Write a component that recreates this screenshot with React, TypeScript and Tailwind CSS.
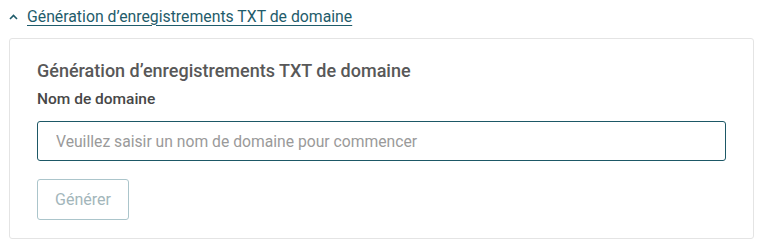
import React, { useState } from 'react';

const App: React.FC = () => {
  const [open, setOpen] = useState(true);
  const [domain, setDomain] = useState('');

  return (
    <div className="min-h-screen bg-white px-[9px] font-['Roboto',sans-serif]">
      {/* Lien repliable */}
      <button
        onClick={() => setOpen(!open)}
        className="flex h-[33px] items-center gap-[9px] text-[15.8px] text-[#1f5c6b]"
      >
        <svg className="h-[8px] w-[9px]" viewBox="0 0 9 6" fill="none" stroke="currentColor" strokeWidth="1.6">
          <path d="M1 5 L4.5 1.5 L8 5" />
        </svg>
        <span className="underline underline-offset-[3px] decoration-1">Génération d’enregistrements TXT de domaine</span>
      </button>

      {open && (
        <div className="mt-[5px] rounded-[3px] border border-[#e4e4e4] px-[27px] pt-[20px] pb-[18px]">
          <h2 className="text-[18px] font-medium leading-[24px] text-[#585858]">
            Génération d’enregistrements TXT de domaine
          </h2>
          <label className="mt-[6px] block text-[15.5px] font-medium leading-[20px] text-[#474747]">
            Nom de domaine
          </label>
          <input
            type="text"
            autoFocus
            value={domain}
            onChange={(e) => setDomain(e.target.value)}
            placeholder="Veuillez saisir un nom de domaine pour commencer"
            className="mt-[12px] block h-[40px] w-full rounded-[3px] border border-[#1d5866] px-[18px] text-[15.7px] text-[#333] caret-[#333] placeholder:text-[#9a9a9a] outline-none"
          />
          <button
            disabled={!domain}
            className="mt-[18px] block h-[41px] w-[92px] rounded-[3px] border border-[#abc5cb] text-[16px] text-[#a3b6bb]"
          >
            Générer
          </button>
        </div>
      )}
    </div>
  );
};

export default App;
